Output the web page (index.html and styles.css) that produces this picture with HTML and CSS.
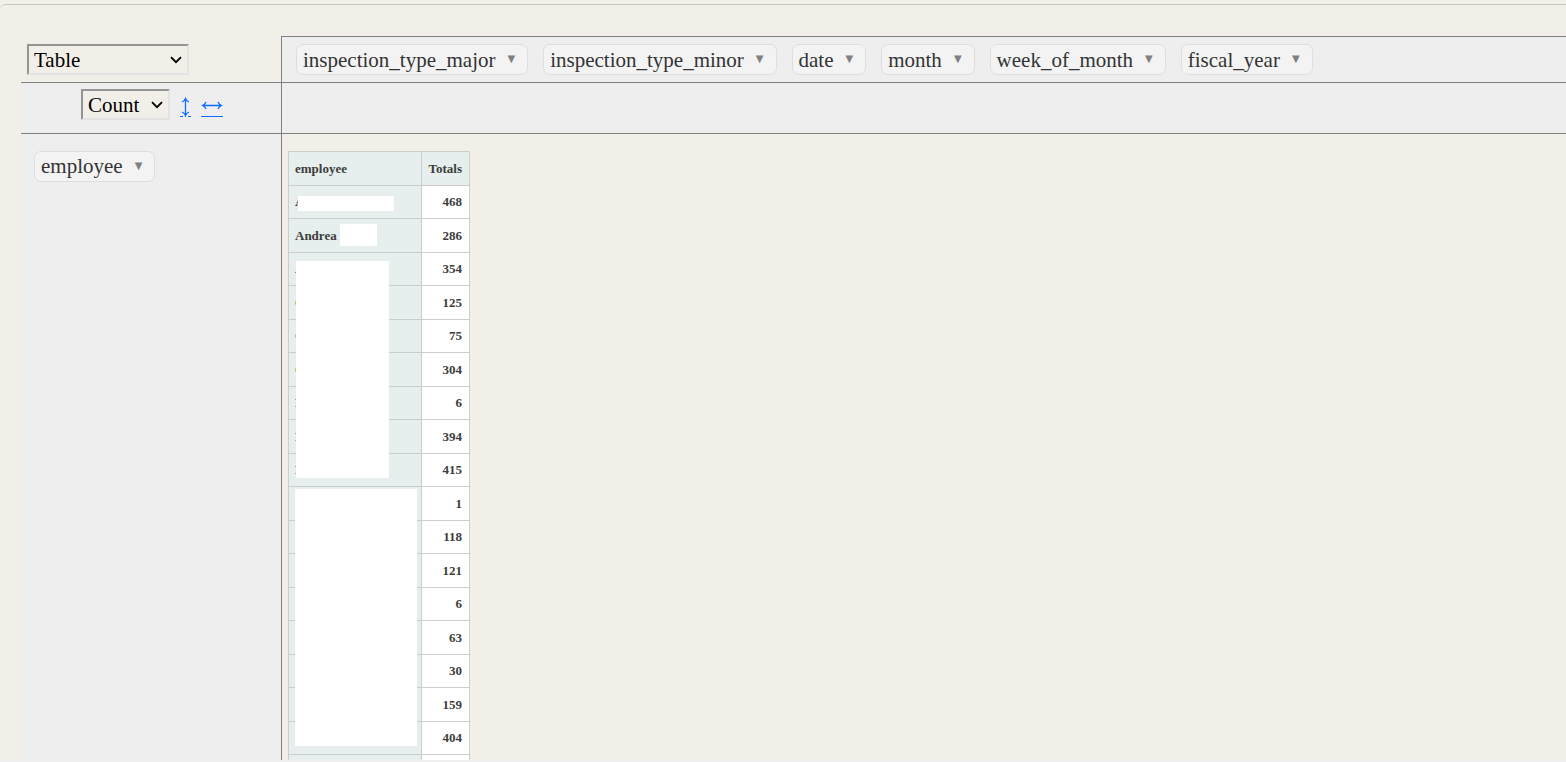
FILE: index.html
```html
<!DOCTYPE html>
<html lang="en">
<head>
<meta charset="utf-8">
<title>Inspections pivot table</title>
<link rel="stylesheet" href="styles.css">
</head>
<body>
<main class="panel">
  <div class="pivot">
    <div class="renderer">
      <div class="picker picker-renderer">
        <select class="select" aria-label="Renderer"><option>Table</option></select>
        <svg class="chevron" width="12" height="8" viewBox="0 0 12 8"><path d="M1 1.2 L6 6.2 L11 1.2" fill="none" stroke="#000" stroke-width="1.8"/></svg>
      </div>
    </div>
    <div class="unused">
      <button class="chip">inspection_type_major<span class="tri">▼</span></button>
      <button class="chip">inspection_type_minor<span class="tri">▼</span></button>
      <button class="chip">date<span class="tri">▼</span></button>
      <button class="chip">month<span class="tri">▼</span></button>
      <button class="chip">week_of_month<span class="tri">▼</span></button>
      <button class="chip">fiscal_year<span class="tri">▼</span></button>
    </div>
    <div class="values">
      <div class="picker picker-aggregator">
        <select class="select" aria-label="Aggregator"><option>Count</option></select>
        <svg class="chevron" width="12" height="8" viewBox="0 0 12 8"><path d="M1 1.2 L6 6.2 L11 1.2" fill="none" stroke="#000" stroke-width="1.8"/></svg>
      </div>
      <a class="order" href="#rows" aria-label="Row order"><svg width="11" height="20" viewBox="0 0 11 20" fill="none" stroke="#0d6efd"><path stroke-width="1.3" d="M5.500 1.500V18.500M2 5Q4.500 4 5.500 1.500Q6.500 4 9 5M2 15Q4.500 16 5.500 18.500Q6.500 16 9 15"/><path d="M0 19.500H3M8 19.500H11M5 19.500H6"/></svg></a>
      <a class="order" href="#cols" aria-label="Column order"><svg width="22" height="20" viewBox="0 0 22 20" fill="none" stroke="#0d6efd"><path stroke-width="1.3" d="M1.500 8.500H20.500M5 5Q4 7.500 1.500 8.500Q4 9.500 5 12M17 5Q18 7.500 20.500 8.500Q18 9.500 17 12"/><path d="M0 19.500H22"/></svg></a>
    </div>
    <div class="cols"></div>
    <div class="rows"><button class="chip">employee<span class="tri">▼</span></button></div>
    <div class="output">
      <div class="result">
        <table class="table">
          <thead><tr><th class="name">employee</th><th class="total">Totals</th></tr></thead>
          <tbody>
            <tr><th class="name">A</th><td>468</td></tr>
            <tr><th class="name">Andrea</th><td>286</td></tr>
            <tr><th class="name">A</th><td>354</td></tr>
            <tr><th class="name">C</th><td>125</td></tr>
            <tr><th class="name">C</th><td>75</td></tr>
            <tr><th class="name">C</th><td>304</td></tr>
            <tr><th class="name">E</th><td>6</td></tr>
            <tr><th class="name">E</th><td>394</td></tr>
            <tr><th class="name">E</th><td>415</td></tr>
            <tr><th class="name"></th><td>1</td></tr>
            <tr><th class="name"></th><td>118</td></tr>
            <tr><th class="name"></th><td>121</td></tr>
            <tr><th class="name"></th><td>6</td></tr>
            <tr><th class="name"></th><td>63</td></tr>
            <tr><th class="name"></th><td>30</td></tr>
            <tr><th class="name"></th><td>159</td></tr>
            <tr><th class="name"></th><td>404</td></tr>
            <tr><th class="name"></th><td></td></tr>
          </tbody>
        </table>
        <div class="mask mask-first"></div>
        <div class="mask mask-second"></div>
        <div class="mask mask-upper"></div>
        <div class="mask mask-lower"></div>
      </div>
    </div>
  </div>
</main>
<div class="strip"></div>
</body>
</html>
```
FILE: styles.css
```css
* { box-sizing: border-box; }
body {
  margin: 0;
  height: 100vh;
  display: flex;
  flex-direction: column;
  overflow: hidden;
  background: #f2efe8;
  color: #333;
  font-family: "Liberation Serif", "Times New Roman", serif;
  font-size: 21px;
}
.panel {
  flex: 1;
  min-height: 0;
  overflow: hidden;
  display: flex;
  margin-top: 4px;
  padding: 31px 0 0 21px;
  border-top: 1px solid #c5c3be;
  border-top-left-radius: 6px;
}
.strip { height: 2px; background: #f0f0f0; }
.pivot {
  flex: 1;
  display: grid;
  grid-template-columns: 260px 1fr;
  grid-template-rows: 46px 51px 1fr;
}
.renderer { padding: 8px 6px; }
.unused, .cols, .rows, .values { background: #eee; }
.unused, .cols, .output { border-left: 1px solid gray; }
.unused, .values, .cols, .rows, .output { border-top: 1px solid gray; }
.unused {
  display: flex;
  align-items: flex-start;
  gap: 15px;
  padding: 7px 14px;
}
.values {
  display: flex;
  align-items: flex-start;
  gap: 10px;
  padding: 6px 0 0 60px;
}
.rows { padding: 17px 13px; }
.output { padding: 17px 6px 0; min-height: 0; overflow: hidden; }
.picker { position: relative; height: 31px; }
.picker-renderer { width: 162px; }
.picker-aggregator { width: 89px; }
.select {
  appearance: none;
  display: block;
  width: 100%;
  height: 31px;
  padding: 1px 5px 0;
  border: 2px solid;
  border-color: #949494 #e3e3e3 #e3e3e3 #949494;
  border-radius: 0;
  background: #f2efe8;
  color: #000;
  font: inherit;
}
.chevron {
  position: absolute;
  right: 7px;
  top: 12px;
  pointer-events: none;
}
.order { padding-top: 8px; }
.order svg { display: block; }
.chip {
  display: flex;
  align-items: center;
  gap: 12px;
  height: 31px;
  padding: 0 12px 0 6px;
  border: 1px solid #dedede;
  border-radius: 7px;
  background: #f3f3f3;
  color: #333;
  font: inherit;
  white-space: nowrap;
}
.unused .chip { padding-top: 1px; }
.tri { color: gray; font-size: 10px; line-height: 14px; padding-bottom: 2px; font-family: "DejaVu Sans", sans-serif; }
.result { position: relative; width: 182px; }
.table {
  width: 100%;
  table-layout: fixed;
  border-collapse: separate;
  border-spacing: 0;
  border-top: 1px solid #cdcdcd;
  border-left: 1px solid #cdcdcd;
  color: #3d3d3d;
  font-size: 13px;
  font-weight: bold;
  line-height: 16px;
}
.table th, .table td {
  height: 33px;
  padding: 0 6px;
  border-right: 1px solid #cdcdcd;
  border-bottom: 1px solid #cdcdcd;
}
.table thead th, .table tbody tr:nth-child(even) > * { height: 34px; }
.table th { background: #e6eeee; text-align: left; }
.table td { background: #fff; text-align: right; }
.table .total { width: 48px; }
.table .total, .table td { padding-right: 7px; text-align: right; }
.mask { position: absolute; background: #fff; }
.mask-first { left: 10px; top: 45px; width: 96px; height: 15px; }
.mask-second { left: 52px; top: 73px; width: 37px; height: 22px; }
.mask-upper { left: 8px; top: 110px; width: 93px; height: 217px; }
.mask-lower { left: 7px; top: 338px; width: 122px; height: 257px; }
```
